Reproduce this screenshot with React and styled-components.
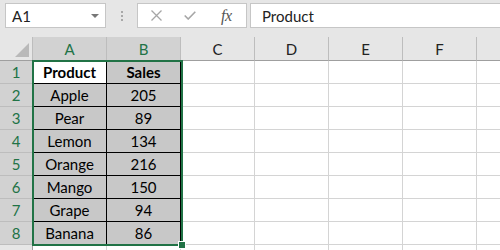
import React from "react";
import styled, { createGlobalStyle } from "styled-components";

const Global = createGlobalStyle`
  html, body { margin: 0; padding: 0; }
  body {
    background: #ffffff;
    font-family: Lato, "Open Sans", "Liberation Sans", sans-serif;
    overflow: hidden;
  }
`;

const GREEN = "#217346";

const Page = styled.div`
  width: 500px;
  height: 250px;
  overflow: hidden;
  background: #fff;
`;

const Toolbar = styled.div`
  display: flex;
  align-items: flex-start;
  height: 37px;
  box-sizing: border-box;
  padding: 3px 0 0 5px;
  background: #e6e6e6;
`;

const NameBox = styled.div`
  position: relative;
  width: 101px;
  height: 25px;
  box-sizing: border-box;
  border: 1px solid #c6c6c6;
  background: #fff;
  display: flex;
  align-items: center;
  padding-left: 6px;
  font-size: 15px;
  color: #222;
`;

const Caret = styled.span`
  position: absolute;
  right: 6px;
  top: 10px;
  width: 0;
  height: 0;
  border-left: 4px solid transparent;
  border-right: 4px solid transparent;
  border-top: 4px solid #777;
`;

const Dots = styled.div`
  width: 31px;
  height: 25px;
  display: flex;
  flex-direction: column;
  align-items: center;
  justify-content: center;
  gap: 2px;
  & > span {
    width: 2px;
    height: 2px;
    background: #a8a8a8;
  }
`;

const FxBox = styled.div`
  width: 110px;
  height: 25px;
  box-sizing: border-box;
  border: 1px solid #c6c6c6;
  background: #fff;
  display: flex;
  align-items: center;
  padding-left: 13px;
`;

const IconSlot = styled.div`
  width: ${(p) => p.$w}px;
  display: flex;
  align-items: center;
`;

const Fx = styled.span`
  font-family: "Liberation Serif", serif;
  font-style: italic;
  font-size: 16px;
  color: #555;
  letter-spacing: -0.5px;
`;

const FormulaInput = styled.div`
  flex: 1;
  margin-left: 3px;
  height: 25px;
  box-sizing: border-box;
  border: 1px solid #c6c6c6;
  border-right: none;
  background: #fff;
  display: flex;
  align-items: center;
  padding-left: 11px;
  font-size: 15px;
  color: #222;
`;

const Sheet = styled.div`
  position: relative;
  display: grid;
  grid-template-columns: 33px repeat(7, 74px);
  grid-template-rows: 24px;
  grid-auto-rows: 23px;
  font-size: 15px;
`;

const Corner = styled.div`
  position: relative;
  background: #e6e6e6;
  border-right: 1px solid #bdbdbd;
  border-bottom: 1px solid #9f9f9f;
  &::after {
    content: "";
    position: absolute;
    right: 3px;
    bottom: 3px;
    width: 0;
    height: 0;
    border-left: 14px solid transparent;
    border-bottom: 14px solid #b9b9b9;
  }
`;

const ColHead = styled.div`
  display: flex;
  align-items: center;
  justify-content: center;
  background: ${(p) => (p.$sel ? "#d2d2d2" : "#e6e6e6")};
  color: ${(p) => (p.$sel ? GREEN : "#222")};
  border-right: 1px solid #bdbdbd;
  border-bottom: 1px solid #9f9f9f;
`;

const RowHead = styled.div`
  display: flex;
  align-items: center;
  justify-content: center;
  background: ${(p) => (p.$sel ? "#d2d2d2" : "#e6e6e6")};
  color: ${(p) => (p.$sel ? GREEN : "#222")};
  border-right: 1px solid #9f9f9f;
  border-bottom: 1px solid #bdbdbd;
`;

const Cell = styled.div`
  display: flex;
  align-items: center;
  justify-content: center;
  color: #000;
  font-weight: ${(p) => (p.$bold ? 700 : 400)};
  background: ${(p) => (p.$shade ? "#c8c8c8" : "#fff")};
  border-right: 1px solid ${(p) => (p.$table ? "#000" : "#d4d4d4")};
  border-bottom: 1px solid ${(p) => (p.$table ? "#000" : "#d4d4d4")};
`;

const Selection = styled.div`
  position: absolute;
  left: 32px;
  top: 23px;
  width: 151px;
  height: 186px;
  box-sizing: border-box;
  border: 2px solid ${GREEN};
  pointer-events: none;
`;

const Handle = styled.div`
  position: absolute;
  right: -5px;
  bottom: -5px;
  width: 6px;
  height: 6px;
  background: ${GREEN};
  border: 1px solid #fff;
`;

const data = [
  ["Product", "Sales"],
  ["Apple", "205"],
  ["Pear", "89"],
  ["Lemon", "134"],
  ["Orange", "216"],
  ["Mango", "150"],
  ["Grape", "94"],
  ["Banana", "86"],
];

const cols = ["A", "B", "C", "D", "E", "F", ""];

export default function App() {
  const rows = [...data, null];
  return (
    <Page>
      <Global />
      <Toolbar>
        <NameBox>
          A1
          <Caret />
        </NameBox>
        <Dots>
          <span />
          <span />
          <span />
        </Dots>
        <FxBox>
          <IconSlot $w={33}>
            <svg width="11" height="11" viewBox="0 0 11 11">
              <path d="M0.5 0.5 L10.5 10.5 M10.5 0.5 L0.5 10.5" stroke="#a6a6a6" strokeWidth="1.3" fill="none" />
            </svg>
          </IconSlot>
          <IconSlot $w={37}>
            <svg width="12" height="9" viewBox="0 0 12 9">
              <path d="M0.7 4.5 L4.2 8 L11.3 0.7" stroke="#a6a6a6" strokeWidth="1.6" fill="none" />
            </svg>
          </IconSlot>
          <IconSlot $w={20}>
            <Fx>fx</Fx>
          </IconSlot>
        </FxBox>
        <FormulaInput>Product</FormulaInput>
      </Toolbar>
      <Sheet>
        <Corner />
        {cols.map((c, i) => (
          <ColHead key={i} $sel={i < 2}>
            {c}
          </ColHead>
        ))}
        {rows.map((r, ri) => (
          <React.Fragment key={ri}>
            <RowHead $sel={ri < 8}>{r ? ri + 1 : ""}</RowHead>
            {cols.map((_, ci) => {
              const inTable = r && ci < 2;
              return (
                <Cell
                  key={ci}
                  $table={inTable}
                  $shade={inTable && !(ri === 0 && ci === 0)}
                  $bold={ri === 0}
                >
                  {inTable ? r[ci] : ""}
                </Cell>
              );
            })}
          </React.Fragment>
        ))}
        <Selection>
          <Handle />
        </Selection>
      </Sheet>
    </Page>
  );
}
